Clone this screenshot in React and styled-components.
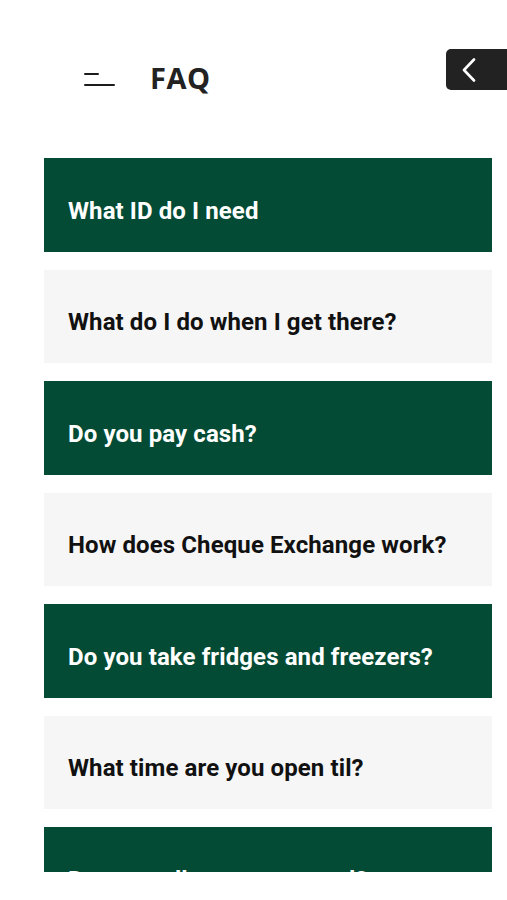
import React from "react";
import styled, { createGlobalStyle } from "styled-components";

const GlobalStyle = createGlobalStyle`
  html, body {
    margin: 0;
    padding: 0;
    background: #ffffff;
  }
  body {
    font-family: Roboto, "Liberation Sans", sans-serif;
    overflow: hidden;
  }
`;

const questions = [
  "What ID do I need",
  "What do I do when I get there?",
  "Do you pay cash?",
  "How does Cheque Exchange work?",
  "Do you take fridges and freezers?",
  "What time are you open til?",
  "Do you collect scrap metal?",
];

function App() {
  return (
    <Page>
      <GlobalStyle />
      <Header>
        <TitleGroup>
          <MenuIcon aria-label="menu">
            <MenuBar $width={15} />
            <MenuBar $width={31} />
          </MenuIcon>
          <Title>FAQ</Title>
        </TitleGroup>
        <BackButton aria-label="back">
          <svg width="14" height="24" viewBox="0 0 14 24" fill="none">
            <path
              d="M12 1.5 L2 12 L12 22.5"
              stroke="#ffffff"
              strokeWidth="2.6"
              strokeLinecap="round"
              strokeLinejoin="round"
            />
          </svg>
        </BackButton>
      </Header>
      <List>
        {questions.map((q, i) => (
          <Card key={i} $dark={i % 2 === 0}>
            {q}
          </Card>
        ))}
      </List>
    </Page>
  );
}

const Page = styled.div`
  width: 507px;
  height: 900px;
  overflow: hidden;
  background: #ffffff;
`;

const Header = styled.header`
  display: flex;
  justify-content: space-between;
  align-items: flex-start;
  padding: 49px 0 0 84px;
  height: 41px;
`;

const TitleGroup = styled.div`
  display: flex;
  align-items: center;
  gap: 35px;
  margin-top: 9px;
  height: 40px;
`;

const MenuIcon = styled.div`
  display: flex;
  flex-direction: column;
  gap: 9px;
  width: 31px;
  margin-top: 3px;
`;

const MenuBar = styled.span`
  display: block;
  width: ${(p) => p.$width}px;
  height: 2px;
  background: #1c1c1c;
  border-radius: 1px;
`;

const Title = styled.h1`
  margin: 0;
  font-family: "Open Sans", "Liberation Sans", sans-serif;
  font-weight: 700;
  font-size: 29px;
  line-height: 40px;
  color: #222222;
  letter-spacing: 0.5px;
`;

const BackButton = styled.button`
  display: flex;
  align-items: center;
  justify-content: flex-start;
  width: 61px;
  height: 41px;
  padding: 0 0 0 16px;
  border: none;
  border-radius: 5px 0 0 5px;
  background: #222222;
  cursor: pointer;
`;

const List = styled.div`
  display: flex;
  flex-direction: column;
  gap: 18px;
  width: 448px;
  height: 714px;
  margin: 68px 0 0 44px;
  overflow: hidden;
`;

const Card = styled.div`
  flex-shrink: 0;
  display: flex;
  align-items: center;
  height: 93.5px;
  box-sizing: border-box;
  padding: 12px 0 0 24px;
  background: ${(p) => (p.$dark ? "#034b34" : "#f6f6f6")};
  color: ${(p) => (p.$dark ? "#ffffff" : "#111111")};
  font-family: Roboto, "Liberation Sans", sans-serif;
  font-weight: 700;
  font-size: 24px;
  letter-spacing: 0.1px;
`;

export default App;
